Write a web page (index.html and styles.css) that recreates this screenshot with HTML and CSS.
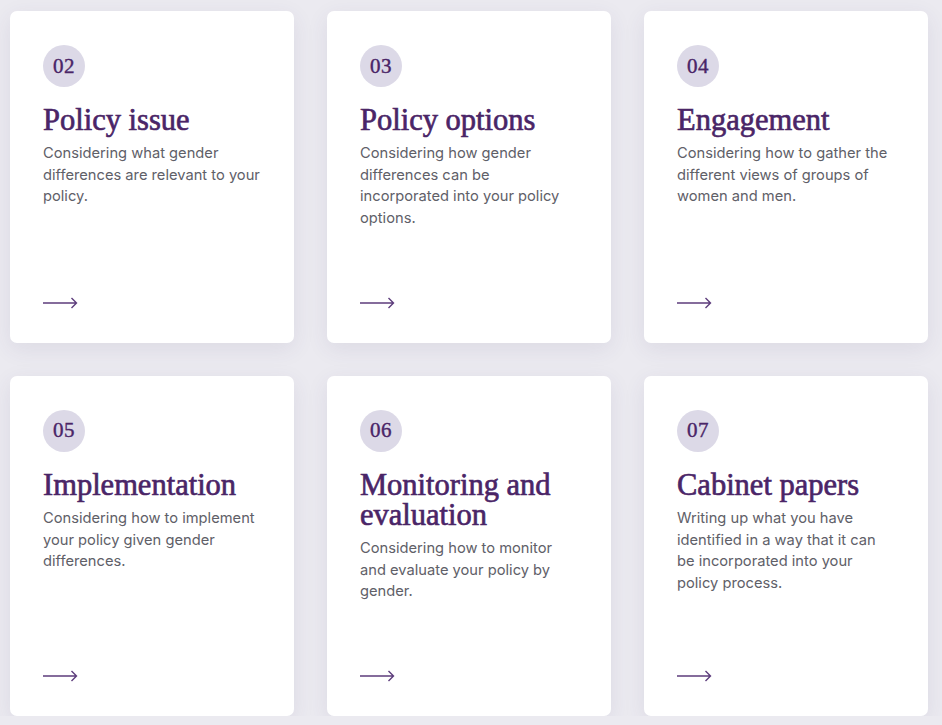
FILE: index.html
```html
<!DOCTYPE html>
<html lang="en">
<head>
<meta charset="utf-8">
<title>Gender analysis steps</title>
<link rel="stylesheet" href="styles.css">
</head>
<body>
<main class="steps">
  <a class="step" href="#">
    <span class="step-num">02</span>
    <h2 class="step-title">Policy issue</h2>
    <p class="step-text">Considering what gender differences are relevant to your policy.</p>
    <svg class="step-arrow" width="35" height="14" viewBox="0 0 35 14"><path d="M0 7H33.5M28.5 2l5 5-5 5"/></svg>
  </a>
  <a class="step" href="#">
    <span class="step-num">03</span>
    <h2 class="step-title">Policy options</h2>
    <p class="step-text">Considering how gender differences can be incorporated into your policy options.</p>
    <svg class="step-arrow" width="35" height="14" viewBox="0 0 35 14"><path d="M0 7H33.5M28.5 2l5 5-5 5"/></svg>
  </a>
  <a class="step" href="#">
    <span class="step-num">04</span>
    <h2 class="step-title">Engagement</h2>
    <p class="step-text">Considering how to gather the different views of groups of women and men.</p>
    <svg class="step-arrow" width="35" height="14" viewBox="0 0 35 14"><path d="M0 7H33.5M28.5 2l5 5-5 5"/></svg>
  </a>
  <a class="step" href="#">
    <span class="step-num">05</span>
    <h2 class="step-title">Implementation</h2>
    <p class="step-text">Considering how to implement your policy given gender differences.</p>
    <svg class="step-arrow" width="35" height="14" viewBox="0 0 35 14"><path d="M0 7H33.5M28.5 2l5 5-5 5"/></svg>
  </a>
  <a class="step" href="#">
    <span class="step-num">06</span>
    <h2 class="step-title">Monitoring and evaluation</h2>
    <p class="step-text">Considering how to monitor and evaluate your policy by gender.</p>
    <svg class="step-arrow" width="35" height="14" viewBox="0 0 35 14"><path d="M0 7H33.5M28.5 2l5 5-5 5"/></svg>
  </a>
  <a class="step" href="#">
    <span class="step-num">07</span>
    <h2 class="step-title">Cabinet papers</h2>
    <p class="step-text">Writing up what you have identified in a way that it can be incorporated into your policy process.</p>
    <svg class="step-arrow" width="35" height="14" viewBox="0 0 35 14"><path d="M0 7H33.5M28.5 2l5 5-5 5"/></svg>
  </a>
</main>
</body>
</html>
```

FILE: styles.css
```css
html, body {
  margin: 0;
  padding: 0;
}

body {
  background: #ebeaf0;
  font-family: Inter, "Noto Sans", sans-serif;
}

.steps {
  display: grid;
  grid-template-columns: repeat(3, 284px);
  column-gap: 33px;
  row-gap: 33px;
  padding: 11px 0 0 10px;
}

.step {
  display: flex;
  flex-direction: column;
  align-items: flex-start;
  background: #fff;
  border-radius: 7px;
  box-shadow: 0 6px 22px rgba(70, 60, 110, 0.09);
  padding: 34px 32px 33px 33px;
  text-decoration: none;
}

.step-num {
  display: flex;
  align-items: center;
  justify-content: center;
  width: 42px;
  height: 42px;
  border-radius: 50%;
  background: #dcd9e7;
  color: #4a2567;
  font-family: "Liberation Serif", serif;
  font-size: 21px;
  letter-spacing: 0.5px;
  -webkit-text-stroke: 0.4px #4a2567;
}

.step-title {
  margin: 18px 0 0;
  color: #4a2567;
  font-family: "Liberation Serif", serif;
  font-weight: 400;
  font-size: 30.5px;
  line-height: 30px;
  -webkit-text-stroke: 0.65px #4a2567;
}

.step-text {
  margin: 8px 0 0;
  color: #606068;
  font-size: 14.7px;
  line-height: 21.7px;
}

.step-arrow {
  margin-top: auto;
  padding-top: 66px;
  fill: none;
  stroke: #5d3d7c;
  stroke-width: 1.4;
}
```
